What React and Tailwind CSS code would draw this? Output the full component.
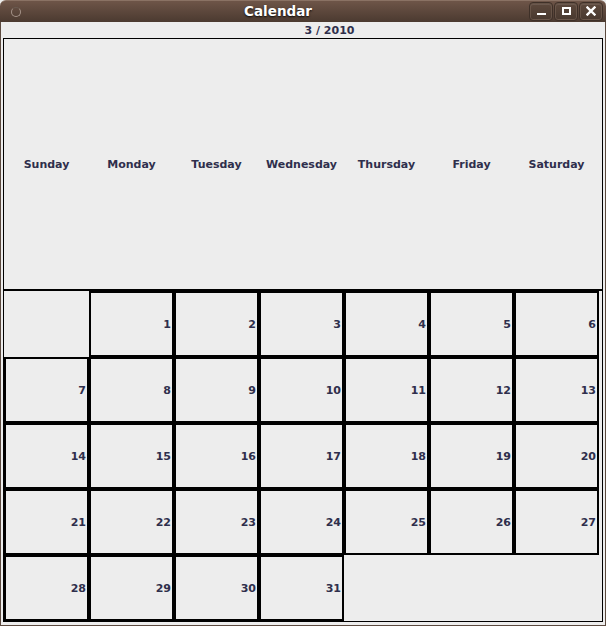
import React from "react";

const days = ["Sunday", "Monday", "Tuesday", "Wednesday", "Thursday", "Friday", "Saturday"];

function TitleButton({ children }) {
  return (
    <div className="w-[22px] h-[17px] rounded-[3px] border border-[#76625599] bg-gradient-to-b from-[#5c483c] to-[#4a3a30] flex items-center justify-center shadow-[inset_0_1px_0_rgba(255,255,255,0.1)] outline outline-1 outline-[#3e3028]">
      {children}
    </div>
  );
}

export default function App() {
  const cells = [];
  for (let i = 0; i < 35; i++) {
    const d = i;
    if (d >= 1 && d <= 31) {
      cells.push(
        <div key={i} className="border-2 border-black flex items-center justify-end pr-[1px] pt-[3px]">
          <span>{d}</span>
        </div>
      );
    } else {
      cells.push(<div key={i} />);
    }
  }

  return (
    <div
      className="w-[606px] h-[626px] flex flex-col bg-[#ededed] text-[#2f2f4c] overflow-hidden"
      style={{ fontFamily: '"DejaVu Sans", "Liberation Sans", sans-serif' }}
    >
      {/* title bar */}
      <div className="h-[22px] shrink-0 rounded-t-[6px] bg-gradient-to-b from-[#6e5548] to-[#4b3a30] border-t border-[#8a7264] flex items-center relative">
        <div className="w-[28px] h-full flex items-center justify-center">
          <div className="w-[10px] h-[10px] rounded-full border-[1.5px] border-[#a59489] border-t-[#6a5a50] ml-[3px] mt-[1px]" />
        </div>
        <div className="flex-1 flex items-center justify-center">
          <span className="text-white font-bold text-[13.5px] leading-none [text-shadow:0_1px_2px_rgba(0,0,0,0.9)]">
            Calendar
          </span>
        </div>
        <div className="flex items-center gap-[3px] pr-[4px] pl-[2px] pb-[1px]">
          <TitleButton>
            <div className="w-[9px] h-[2px] bg-white mt-[6px]" />
          </TitleButton>
          <TitleButton>
            <div className="w-[9px] h-[8px] border-2 border-white" />
          </TitleButton>
          <TitleButton>
            <svg width="10" height="10" viewBox="0 0 10 10">
              <path d="M1.5 1.5 L8.5 8.5 M8.5 1.5 L1.5 8.5" stroke="white" strokeWidth="2.4" strokeLinecap="square" />
            </svg>
          </TitleButton>
        </div>
      </div>

      {/* window body */}
      <div className="flex-1 flex flex-col border-l border-r border-b border-l-[#5c4a3f] border-r-[#5c4a3f] border-b-[#5c4a3f]">
        {/* month label */}
        <div className="h-[16px] shrink-0 flex items-center justify-center pl-[53px] text-[11px] font-bold leading-none">
          <span>3 / 2010</span>
        </div>

        {/* main panel */}
        <div className="ml-[2px] mr-[2px] w-[600px] h-[584px] border border-black flex flex-col text-[11px] font-bold">
          <div className="h-[250px] w-[595px] grid grid-cols-7 items-center pt-[2px]">
            {days.map((d) => (
              <div key={d} className="text-center">
                {d}
              </div>
            ))}
          </div>
          <div className="h-[2px] bg-black" />
          <div className="w-[595px] h-[330px] grid grid-cols-7 grid-rows-5">{cells}</div>
        </div>
      </div>
    </div>
  );
}
